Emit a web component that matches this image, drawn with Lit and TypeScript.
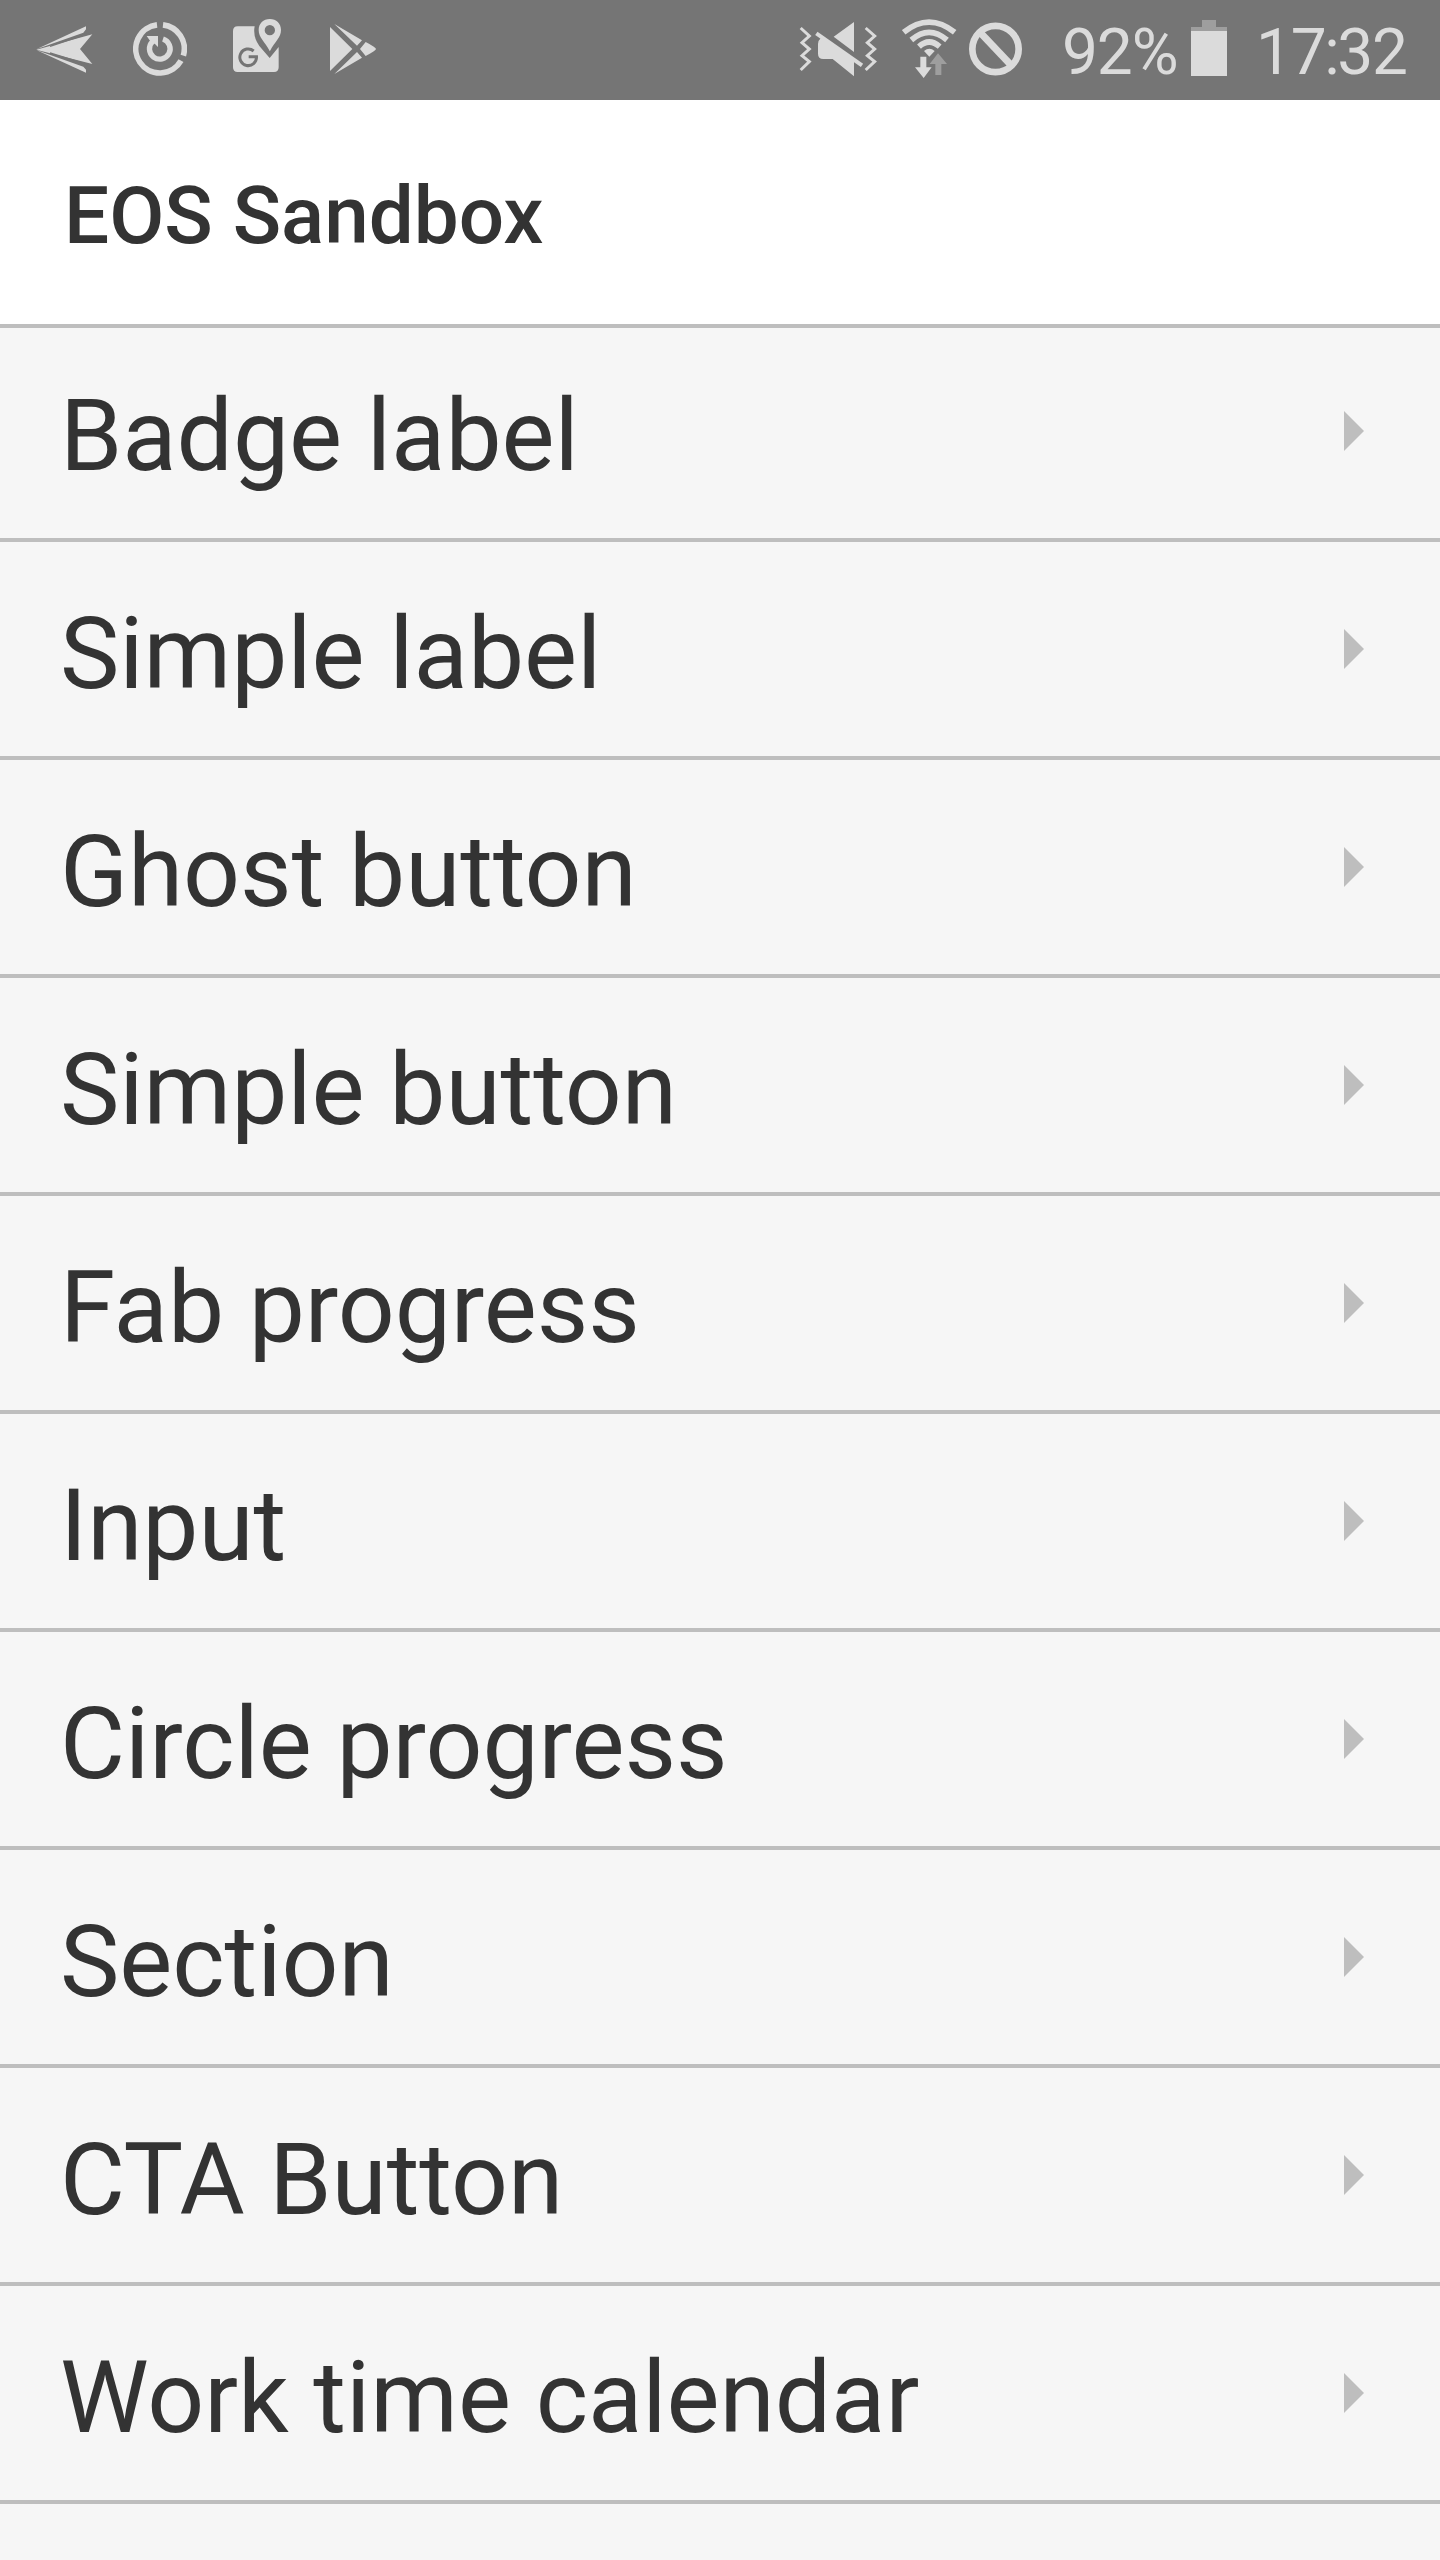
import { LitElement, html, css } from "lit";
import { customElement, property } from "lit/decorators.js";

@customElement("status-bar")
class StatusBar extends LitElement {
  static styles = css`
    :host {
      display: flex;
      justify-content: space-between;
      box-sizing: border-box;
      height: 100px;
      padding-left: 36px;
      background: #757575;
      color: #dbdbdb;
      font: 400 64px/100px Roboto, sans-serif;
      letter-spacing: -1.1px;
      overflow: hidden;
    }
    .group { display: flex; height: 100px; }
    .system { width: 641px; }
    svg { display: block; flex: none; height: 100px; fill: #dbdbdb; }
    .line { fill: none; stroke: #dbdbdb; }
    .dim { fill: #9e9e9e; }
    .cut { fill: none; stroke: #757575; }
    .send { width: 57px; margin-right: 40px; }
    .sync { width: 54px; margin-right: 46px; }
    .maps { width: 48px; margin-right: 49px; }
    .play { width: 46px; }
    .mute { width: 78px; margin-right: 25px; }
    .wifi { width: 55px; margin-right: 12px; }
    .block { width: 53px; margin-right: 40px; }
    .battery { width: 36px; }
    .percent, .time { flex: none; box-sizing: border-box; height: 100px; padding-top: 3px; white-space: nowrap; }
    .percent { width: 129px; }
    .time { margin-left: 29px; }
    .colon { margin: 0 -1.5px; }
  `;
  render() {
    return html`
      <div class="group">
        <svg class="send" viewBox="108 0 171 300">
          <path d="M109 148L258 79V88L250 98Z M109 149L277 103L240 147L277 192Z M109 150L250 200L258 209V218Z" />
          <path class="cut" stroke-width="4" d="M150 139L264 101M150 159L264 194" />
        </svg>
        <svg class="sync" viewBox="399 0 162 300">
          <path class="line" stroke-width="17" d="M471 74.500A72.500 72.500 0 1 0 543 182M489 74.500A72.500 72.500 0 0 1 550 167" />
          <path class="line" stroke-width="16" d="M489 117A31 31 0 1 1 458 124" />
          <path d="M440 108H474V141L465 132L452 125Z" />
        </svg>
        <svg class="maps" viewBox="699 0 144 300">
          <path d="M713 79H764Q758 110 778 138L809 174L836 141V202Q836 216 822 216H713Q699 216 699 202V93Q699 79 713 79Z" />
          <path fill-rule="evenodd" d="M809.500 57C829 57 843 71 843 90C843 113 825 124 809.500 154C794 124 776 113 776 90C776 71 790 57 809.500 57ZM809.500 75A15.500 15.500 0 1 0 809.500 106A15.500 15.500 0 1 0 809.500 75Z" />
          <path class="cut" stroke-width="9" d="M761 153A25 25 0 1 0 769.500 170.500H746" />
        </svg>
        <svg class="play" viewBox="990 0 138 300">
          <path d="M990 81L1057 147L990 213Z M1003 72L1086 121L1071 137Z M1003 222L1086 173L1071 156Z M1080 147L1097 126Q1128 142 1128 147Q1128 152 1097 168Z" />
        </svg>
      </div>
      <div class="group system">
        <svg class="mute" viewBox="57 0 234 300">
          <path class="line" stroke-width="9" d="M62 84L88 108L66 128L88 147L66 167L88 185L62 210M257 84L284 108L262 128L284 147L262 167L284 185L257 210" />
          <path d="M222 66V156L161 110Z M122 108L222 180V229L158 177H130Q114 177 114 161V132Q114 122 122 115Z" />
          <path class="line" stroke-width="12" d="M109 100L246 196" />
        </svg>
        <svg class="wifi" viewBox="366 0 165 300">
          <path class="line" stroke-width="17" d="M371 97Q447 36 524 97M394 120Q447 74 501 120M417 140Q447 112 479 140" />
          <path d="M432 153Q448 140 464 153L448 170Z" />
          <path d="M421 170H439V202H455L431 234L405 202H421Z" />
          <path class="dim" d="M474 160L501 192H484V225H466V192H449Z" />
        </svg>
        <svg class="block" viewBox="567 0 159 300">
          <circle class="line" stroke-width="20" cx="646.500" cy="147" r="69.500" />
          <path class="line" stroke-width="21" d="M602 99L690 192" />
        </svg>
        <div class="percent">92%</div>
        <svg class="battery" viewBox="453 0 108 300" shape-rendering="crispEdges">
          <path class="dim" d="M486 60H528V81H561V93H453V81H486Z" />
          <path d="M453 93H561V228H453Z" />
        </svg>
        <div class="time">17<span class="colon">:</span>32</div>
      </div>
    `;
  }
}

@customElement("menu-row")
class MenuRow extends LitElement {
  @property() label = "";
  static styles = css`
    :host {
      display: flex;
      align-items: center;
      justify-content: space-between;
      box-sizing: border-box;
      height: 218px;
      padding: 0 76px 0 60px;
      border-bottom: 4px solid #bebebe;
      color: #333;
      font: 400 100px/120px Roboto, sans-serif;
      letter-spacing: -0.05px;
    }
    .label { padding-top: 10px; white-space: nowrap; }
    .arrow { display: block; width: 20px; height: 40px; fill: #bebebe; }
  `;
  render() {
    return html`<span class="label">${this.label}</span>
      <svg class="arrow" viewBox="0 0 20 40"><path d="M0 0L20 20L0 40Z" /></svg>`;
  }
}

@customElement("app-root")
class AppRoot extends LitElement {
  static styles = css`
    :host {
      display: block;
      width: 1440px;
      height: 2560px;
      overflow: hidden;
      background: #f6f6f6;
    }
    .header {
      box-sizing: border-box;
      height: 228px;
      padding: 4px 64px 0;
      border-bottom: 4px solid #bebebe;
      background: #fff;
      color: #333;
      font: 500 80px/224px Roboto, sans-serif;
    }
    .title { margin: 0; font: inherit; }
    .list { margin-top: -4px; }
  `;
  private items = [
    "Badge label", "Simple label", "Ghost button", "Simple button", "Fab progress",
    "Input", "Circle progress", "Section", "CTA Button", "Work time calendar",
  ];
  render() {
    return html`
      <status-bar></status-bar>
      <header class="header"><h1 class="title">EOS Sandbox</h1></header>
      <main class="list">${this.items.map((t) => html`<menu-row label=${t}></menu-row>`)}</main>
    `;
  }
}
